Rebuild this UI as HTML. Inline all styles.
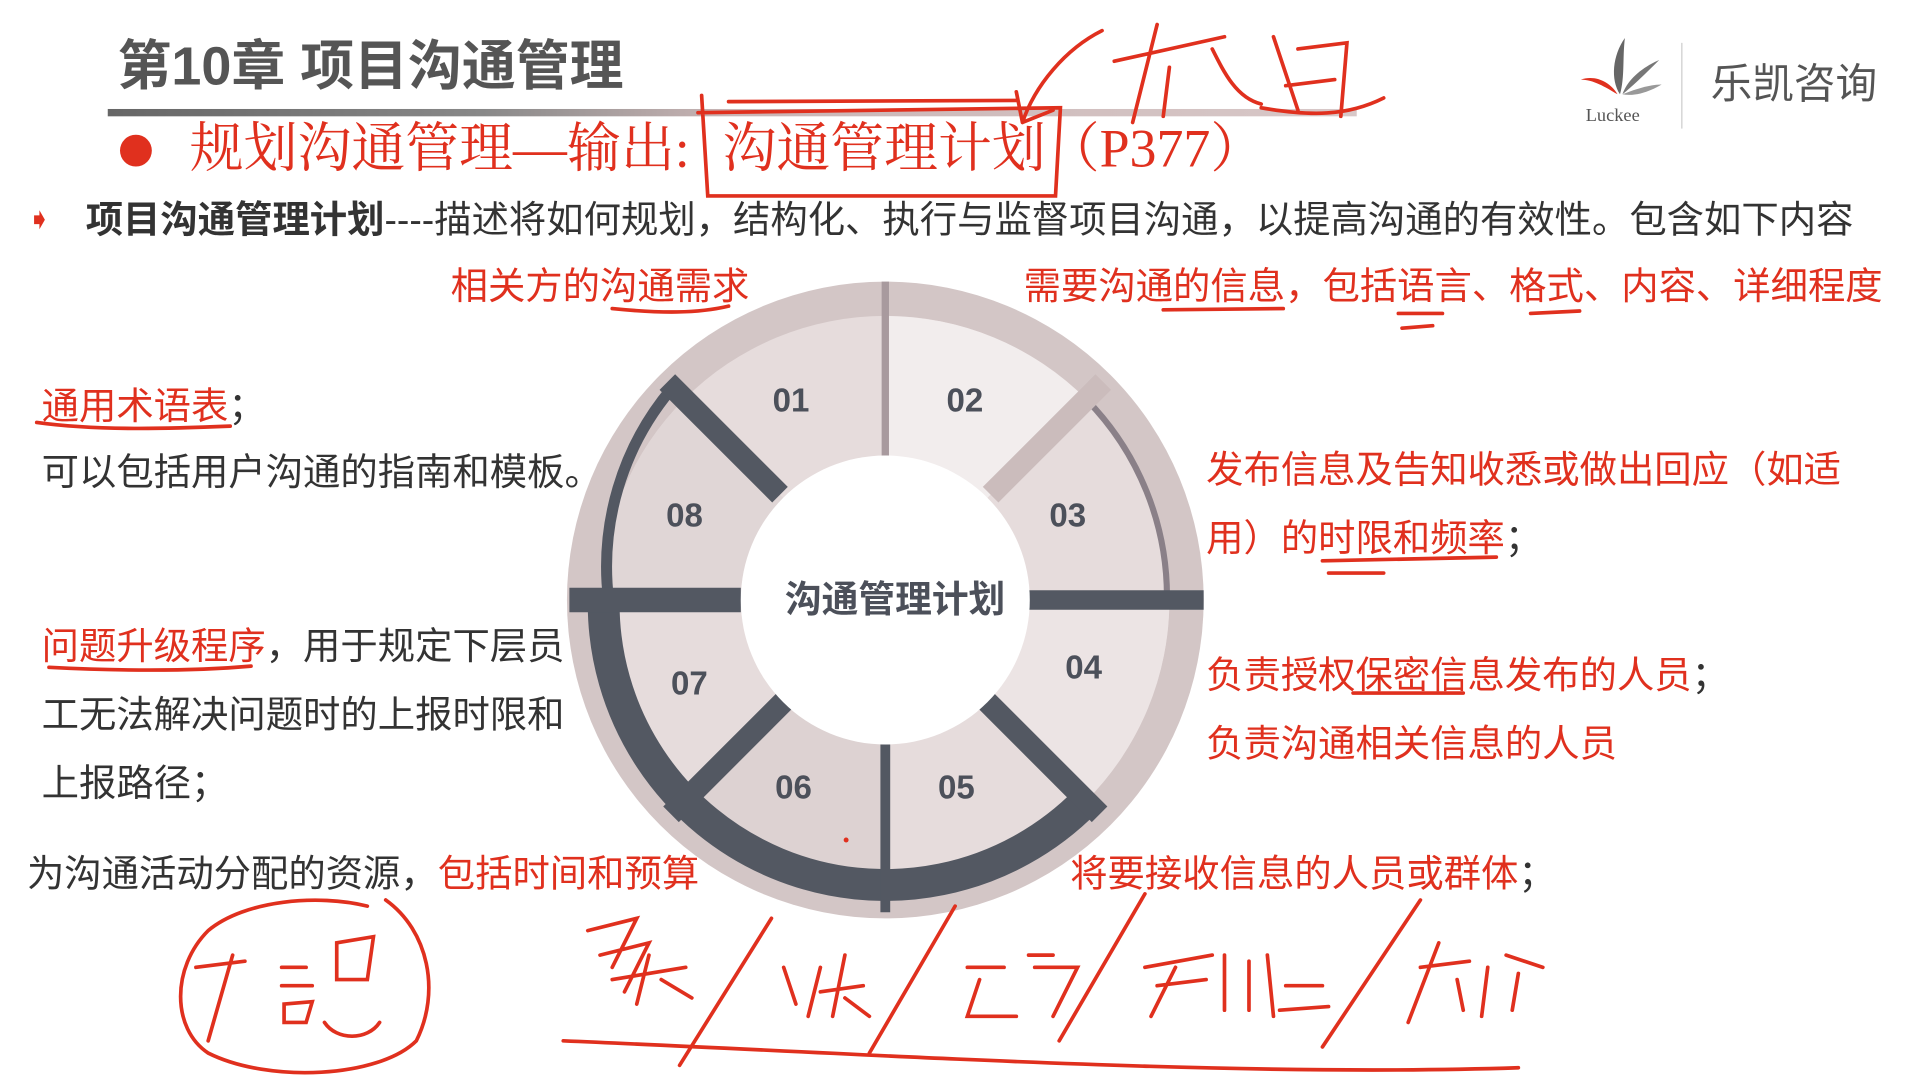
<!DOCTYPE html>
<html><head><meta charset="utf-8"><style>
html,body{margin:0;padding:0;background:#fff;width:1920px;height:1080px;overflow:hidden}
#w{position:absolute;left:0;top:0;width:1568px;height:882px;transform:scale(1.22449);transform-origin:0 0;font-family:"Liberation Sans","Noto Sans CJK SC",sans-serif}
.t{position:absolute;white-space:nowrap;font-size:30.5px;line-height:1}
.r{color:#e0301e}.k{color:#333}
.s{font-family:'Liberation Serif','Noto Serif CJK SC',serif;font-size:44px;color:#e0301e;position:absolute;white-space:nowrap;line-height:1}
</style></head><body><div id="w">
<div class="t" style="left:96px;top:33px;font-size:44px;font-weight:bold;color:#555">第10章 项目沟通管理</div>
<div style="position:absolute;left:88px;top:89px;width:1020px;height:6px;background:linear-gradient(90deg,#666 0,#888 30%,#c9b5b5 50%,#d8c8c8 100%)"></div>
<div style="position:absolute;left:98px;top:110px;width:26px;height:26px;border-radius:50%;background:#e0301e"></div>
<div class="s" style="left:155px;top:100px">规划沟通管理—输出:</div>
<div class="s" style="left:590px;top:100px">沟通管理计划（P377）</div>
<div class="t r" style="left:22px;top:168px;font-size:24px">➧</div>
<div class="t k" style="left:70px;top:165px"><b>项目沟通管理计划</b>----描述将如何规划，结构化、执行与监督项目沟通，以提高沟通的有效性。包含如下内容</div>
<div class="t r" style="left:368px;top:219px">相关方的沟通需求</div>
<div class="t r" style="left:836px;top:219px">需要沟通的信息，包括语言、格式、内容、详细程度</div>
<div class="t r" style="left:34px;top:317px">通用术语表<span class="k">；</span></div>
<div class="t k" style="left:34px;top:371px">可以包括用户沟通的指南和模板。</div>
<div class="t r" style="left:985px;top:369px">发布信息及告知收悉或做出回应（如适</div>
<div class="t r" style="left:985px;top:425px">用）的时限和频率<span class="k">；</span></div>
<div class="t k" style="left:34px;top:513px"><span class="r">问题升级程序</span>，用于规定下层员</div>
<div class="t k" style="left:34px;top:569px">工无法解决问题时的上报时限和</div>
<div class="t k" style="left:34px;top:625px">上报路径；</div>
<div class="t r" style="left:985px;top:537px">负责授权保密信息发布的人员<span class="k">；</span></div>
<div class="t r" style="left:985px;top:593px">负责沟通相关信息的人员</div>
<div class="t k" style="left:22px;top:699px">为沟通活动分配的资源，<span class="r">包括时间和预算</span></div>
<div class="t r" style="left:874px;top:699px">将要接收信息的人员或群体<span class="k">；</span></div>
<svg style="position:absolute;left:1285px;top:25px" width="80" height="80" viewBox="0 0 80 80">
<path d="M38 52 C30 40 32 20 42 6 C40 22 42 38 38 52Z" fill="#666"/>
<path d="M40 52 C44 40 56 30 70 24 C60 34 50 44 40 52Z" fill="#777"/>
<path d="M36 52 C26 46 16 40 6 40 C18 36 30 42 36 52Z" fill="#e0301e"/>
<path d="M40 52 C50 48 62 44 72 44 C62 50 50 54 40 52Z" fill="#999"/>
<text x="10" y="74" font-size="15" fill="#555" font-family="Liberation Serif">Luckee</text>
</svg>
<div style="position:absolute;left:1373px;top:35px;width:1px;height:70px;background:#ccc"></div>
<div class="t" style="left:1397px;top:52px;font-size:34px;color:#555">乐凯咨询</div>
<svg style="position:absolute;left:0;top:0" width="1568" height="882" viewBox="0 0 1568 882">
<circle cx="723" cy="490" r="260" fill="#d3c6c6"/>
<circle cx="723" cy="490" r="232" fill="#e6dcdc"/>
<path d="M723 490 L723 258 A232 232 0 0 1 887 326 Z" fill="#f2eded"/>
<path d="M723 490 L723 722 A232 232 0 0 1 559 654 Z" fill="#ddd2d2"/>
<path d="M723 490 L491 490 A232 232 0 0 1 559 326 Z" fill="#e0d6d6"/>
<path d="M723 490 L955 490 A232 232 0 0 1 887 654 Z" fill="#ece4e4"/>
<path d="M493 490 A230 230 0 0 0 887 654" fill="none" stroke="#535862" stroke-width="26"/>
<path d="M497 490 A226 226 0 0 1 548 318" fill="none" stroke="#535862" stroke-width="9"/>
<path d="M887 326 A230 230 0 0 1 953 490" fill="none" stroke="#8a8088" stroke-width="5"/>
<g stroke-width="18">
<line x1="605" y1="490" x2="465" y2="490" stroke="#535862" stroke-width="20"/>
<line x1="840" y1="490" x2="983" y2="490" stroke="#535862" stroke-width="16"/>
<line x1="723" y1="608" x2="723" y2="745" stroke="#535862" stroke-width="8"/>
<line x1="723" y1="372" x2="723" y2="230" stroke="#a89a9e" stroke-width="6"/>
<line x1="640" y1="573" x2="548" y2="665" stroke="#535862"/>
<line x1="806" y1="573" x2="898" y2="665" stroke="#535862"/>
<line x1="637" y1="404" x2="545" y2="312" stroke="#535862"/>
<line x1="809" y1="404" x2="901" y2="312" stroke="#cbbcbc"/>
</g>
<circle cx="723" cy="490" r="118" fill="#fff"/>
<g font-family="Liberation Sans" font-weight="bold" font-size="27" fill="#4c505a" text-anchor="middle">
<text x="646" y="336">01</text><text x="788" y="336">02</text><text x="872" y="430">03</text><text x="885" y="554">04</text>
<text x="781" y="652">05</text><text x="648" y="652">06</text><text x="563" y="567">07</text><text x="559" y="430">08</text>
<text x="731" y="500" font-size="30" font-family="Liberation Sans,Noto Sans CJK SC">沟通管理计划</text>
</g>
<g fill="none" stroke="#e0301e" stroke-width="3" stroke-linecap="round">
<path d="M573 78 L578 160 L862 160 L866 88 L570 92"/>
<path d="M595 83 L830 82"/>
<path d="M900 25 C870 40 845 70 835 100 M835 100 L830 75 M835 100 L860 90"/>
<path d="M910 50 L1000 30 M945 20 L925 100 M955 55 L950 95 M990 40 C1000 60 1010 80 1030 85 M1040 30 L1060 90 M1060 40 L1100 35 L1095 95 M1050 70 L1090 65 M1030 88 C1070 95 1100 95 1130 80"/>
<path d="M500 252 C540 256 570 256 595 250"/>
<path d="M950 253 L1048 252 M1142 256 L1178 256 M1145 268 L1170 266 M1250 256 L1290 254"/>
<path d="M30 345 C80 352 140 350 188 348"/>
<path d="M1080 458 L1222 455 M1085 468 L1130 468"/>
<path d="M40 545 C100 548 160 548 205 544"/>
<path d="M1105 566 L1195 566"/>
<path d="M315 735 C350 760 360 810 340 850 C310 880 220 885 170 860 C140 840 140 790 170 760 C200 735 260 730 300 740"/>
<path d="M190 780 L170 850 M160 790 L200 785 M230 790 L250 790 M230 805 L255 805 M232 820 L255 818 L250 835 L232 835Z M275 770 L305 765 L300 800 L275 800Z M265 835 C275 850 300 850 310 835"/>
<path d="M480 760 L520 750 L500 790 M490 780 L530 770 L510 810 M500 800 L560 790 M530 780 L520 820 M540 800 L565 815"/>
<path d="M630 750 L555 870 M780 740 L710 860 M935 730 L865 850 M1160 735 L1080 855"/>
<path d="M640 790 L650 820 M670 790 L660 830 M690 780 L680 830 M670 810 L705 805 M690 815 L710 830"/>
<path d="M790 790 L820 790 M800 800 L790 830 L830 830 M840 780 L860 780 M845 790 L880 790 L860 830"/>
<path d="M935 790 L990 780 M945 805 L985 800 M960 790 L940 830 M1000 780 L1000 825 M1020 785 L1020 825 M1035 780 L1040 830 M1050 805 L1080 805 M1045 825 L1085 822"/>
<path d="M1160 790 L1200 785 M1175 770 L1150 835 M1190 800 L1195 825 M1215 790 L1210 830 M1230 780 L1260 790 M1240 795 L1235 825"/>
<path d="M460 850 C700 860 1000 880 1240 872"/>
</g>
<circle cx="691" cy="686" r="2" fill="#e0301e"/>
</svg>
</div></body></html>
